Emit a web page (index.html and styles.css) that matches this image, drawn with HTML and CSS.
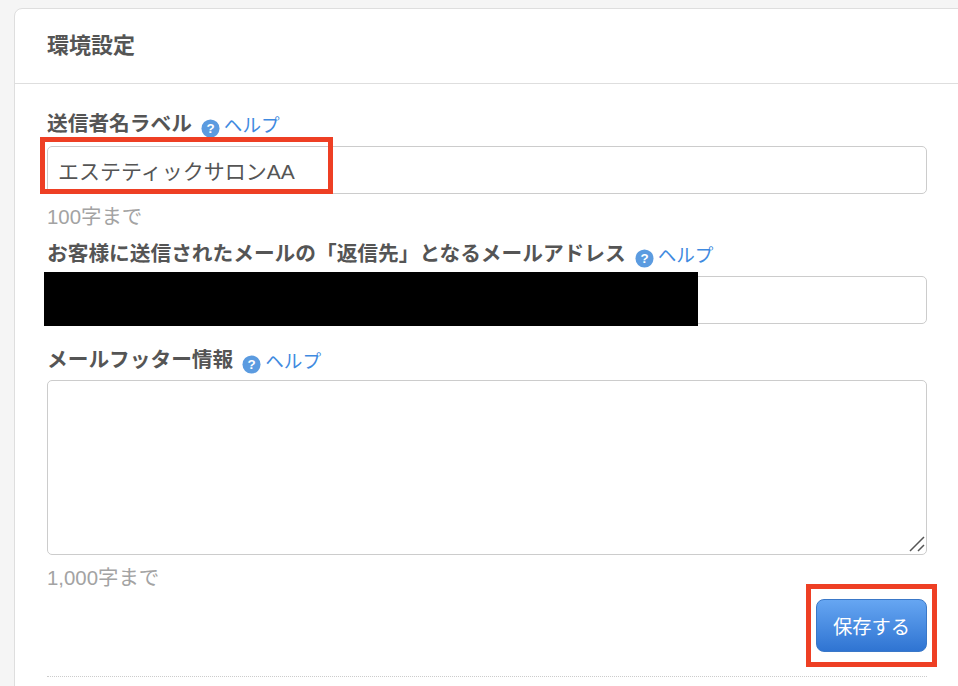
FILE: index.html
```html
<!DOCTYPE html>
<html lang="ja">
<head>
<meta charset="utf-8">
<title>環境設定</title>
<link rel="stylesheet" href="styles.css">
</head>
<body>
<div class="card">
  <h2 class="card-title">環境設定</h2>
  <form class="form">
    <div class="label-row label-first"><span class="label">送信者名ラベル</span><svg class="help-icon" viewBox="0 0 20 20"><circle cx="10" cy="10" r="9.5" fill="#5b9be0"/><text x="10" y="14.6" text-anchor="middle" class="help-mark">?</text></svg><a class="help-link">ヘルプ</a></div>
    <input class="field field-first" type="text" value="エステティックサロンAA">
    <div class="hint hint-one">100字まで</div>
    <div class="label-row label-second"><span class="label">お客様に送信されたメールの「返信先」となるメールアドレス</span><svg class="help-icon" viewBox="0 0 20 20"><circle cx="10" cy="10" r="9.5" fill="#5b9be0"/><text x="10" y="14.6" text-anchor="middle" class="help-mark">?</text></svg><a class="help-link">ヘルプ</a></div>
    <input class="field field-second" type="text">
    <div class="label-row label-third"><span class="label label-short">メールフッター情報</span><svg class="help-icon" viewBox="0 0 20 20"><circle cx="10" cy="10" r="9.5" fill="#5b9be0"/><text x="10" y="14.6" text-anchor="middle" class="help-mark">?</text></svg><a class="help-link">ヘルプ</a></div>
    <div class="area-wrap">
      <textarea class="area"></textarea>
      <svg class="grip" viewBox="0 0 16 16"><path d="M1 15 15 1M9 15l6-6" fill="none" stroke="#555" stroke-width="1.5"/></svg>
    </div>
    <div class="hint hint-two">1,000字まで</div>
    <div class="actions"><button class="save" type="button">保存する</button></div>
    <div class="divider"></div>
  </form>
</div>
<div class="mark-box mark-input"></div>
<div class="mark-box mark-button"></div>
<div class="redaction"></div>
</body>
</html>
```

FILE: styles.css
```css
html, body { margin: 0; padding: 0; height: 686px; overflow: hidden; }
body {
  position: relative;
  background: #f5f5f5;
  font-family: "Liberation Sans", "Noto Sans CJK JP", sans-serif;
  color: #555;
}
.card {
  margin: 8px 0 0 14px;
  width: 960px;
  height: 700px;
  box-sizing: border-box;
  background: #fff;
  border: 1px solid #dedede;
  border-radius: 8px 0 0 0;
}
.card-title {
  margin: 0;
  height: 75px;
  box-sizing: border-box;
  padding: 0 0 0 32px;
  line-height: 73px;
  font-size: 22px;
  font-weight: 700;
  color: #555;
  border-bottom: 1px solid #dedede;
}
.form { width: 880px; margin-left: 32px; }
.label-row { display: flex; align-items: center; height: 24px; }
.label-first { margin-top: 28px; }
.label-second { margin-top: 14px; }
.label-third { margin-top: 24px; }
.label { font-size: 20.7px; font-weight: 700; color: #555; line-height: 24px; }
.help-icon { width: 19px; height: 19px; margin: 8px 4px 0 9px; flex: none; }
.help-mark { font-size: 14px; font-weight: 700; fill: #fff; font-family: "Liberation Sans", sans-serif; }
.help-link { font-size: 18.6px; color: #3f8ae0; line-height: 24px; padding-top: 3px; }
.field {
  display: block;
  width: 100%;
  height: 48px;
  box-sizing: border-box;
  margin: 10px 0 0;
  padding: 0 10px;
  border: 1px solid #ccc;
  border-radius: 5px;
  background: #fff;
  font: 21px "Liberation Sans", "Noto Sans CJK JP", sans-serif;
  color: #555;
}
.area-wrap { position: relative; margin-top: 8px; height: 175px; }
.area {
  display: block;
  width: 100%;
  height: 175px;
  box-sizing: border-box;
  margin: 0;
  padding: 10px;
  border: 1px solid #ccc;
  border-radius: 5px;
  background: #fff;
  resize: none;
}
.grip { position: absolute; right: 2px; bottom: 3px; width: 16px; height: 16px; }
.hint { font-size: 20.4px; color: #a3a3a3; line-height: 22px; }
.hint-one { margin-top: 12px; }
.hint-two { margin-top: 12px; }
.actions { display: flex; justify-content: flex-end; margin-top: 10px; }
.save {
  width: 111px;
  height: 53px;
  box-sizing: border-box;
  border: 1px solid #3a78c8;
  border-radius: 8px;
  background: linear-gradient(#66a6f2, #2f74d2);
  color: #fff;
  font: 19.3px "Liberation Sans", "Noto Sans CJK JP", sans-serif;
  padding: 0;
}
.divider { margin-top: 24px; border-top: 1px dotted #ccc; }
.mark-box { position: absolute; box-sizing: border-box; border: 5px solid #ee3f24; }
.mark-input { left: 40px; top: 137px; width: 293px; height: 57px; }
.mark-button { left: 806px; top: 584px; width: 131px; height: 83px; }
.redaction { position: absolute; left: 44px; top: 272px; width: 654px; height: 54px; background: #000; }
```
